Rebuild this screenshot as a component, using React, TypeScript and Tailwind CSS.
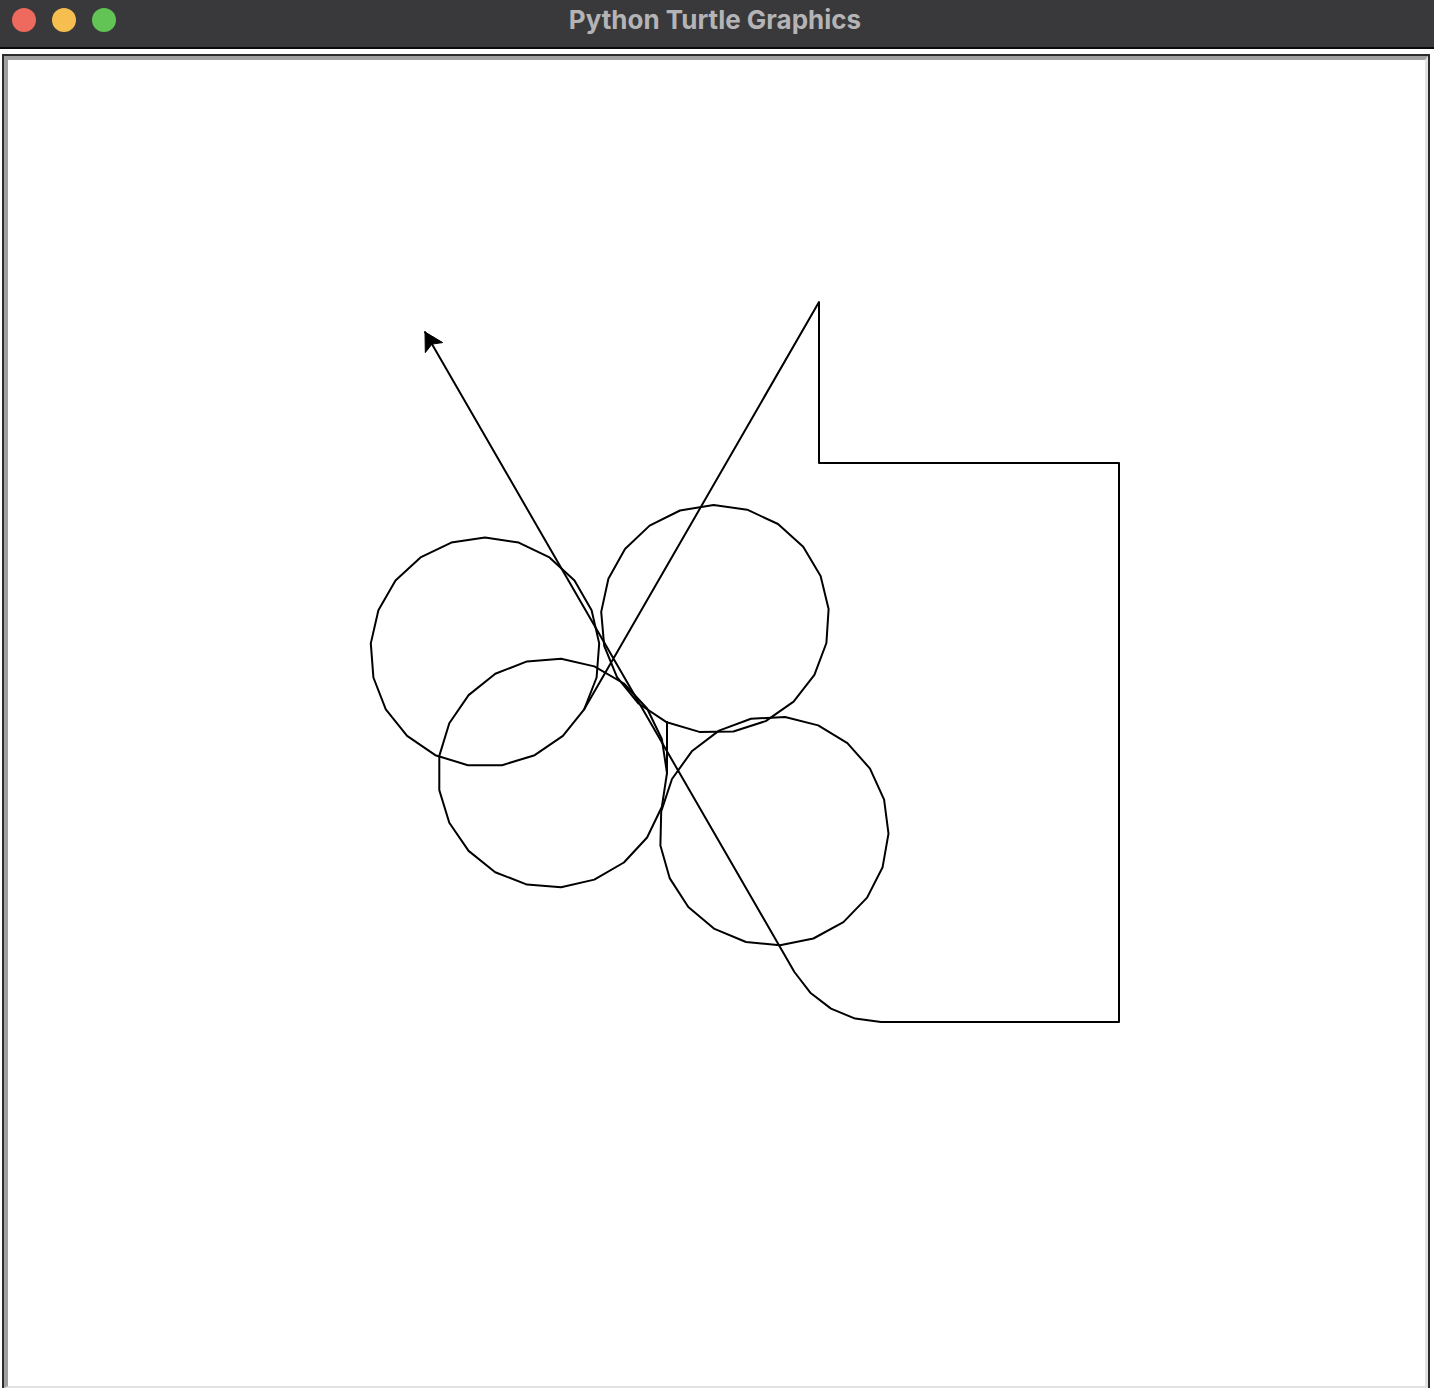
import React from 'react';

// turtle.circle draws a 21-sided polygon for this radius; vertices lie on the circle
const polyCircle = (cx: number, cy: number, r: number, startDeg: number, steps = 21) => {
  const pts: string[] = [];
  for (let i = 0; i < steps; i++) {
    const a = ((startDeg - (360 / steps) * i) * Math.PI) / 180;
    pts.push(`${(cx + r * Math.cos(a)).toFixed(1)},${(cy + r * Math.sin(a)).toFixed(1)}`);
  }
  return pts.join(' ');
};

const circles = [
  { cx: 485, cy: 652, r: 114.5, start: 30 },
  { cx: 715, cy: 619, r: 114, start: 115 },
  { cx: 552.5, cy: 773, r: 114.5, start: 0 },
  { cx: 774, cy: 831, r: 114.5, start: 87 },
];

// arc: circle(50, 60) at 2x scale -> 4 segments
const arcPts = [90, 105, 120, 135, 150].map((d) => {
  const a = (d * Math.PI) / 180;
  return `${(881 + 100 * Math.cos(a)).toFixed(1)},${(922 + 100 * Math.sin(a)).toFixed(1)}`;
});

const mainPath = [
  '584.2,709.3',
  '819,302',
  '819,463',
  '1119,463',
  '1119,1022',
  ...arcPts,
  '425,332',
].join(' ');

const TurtleCanvas: React.FC = () => (
  <svg width={1416} height={1326} viewBox="8 60 1416 1326" className="block">
    <g fill="none" stroke="#000" strokeWidth={2} strokeLinejoin="round" strokeLinecap="round">
      {circles.map((c, i) => (
        <polygon key={i} points={polyCircle(c.cx, c.cy, c.r, c.start)} />
      ))}
      <line x1={667} y1={722} x2={667} y2={773} />
      <polyline points={mainPath} />
    </g>
    <polygon
      points="425,332 442.7,342.6 432,344.1 425.3,352.6"
      fill="#000"
      stroke="#000"
      strokeWidth={1}
      strokeLinejoin="round"
    />
  </svg>
);

const App: React.FC = () => {
  return (
    <div className="w-[1434px] h-[1388px] bg-white overflow-hidden">
      <div className="relative h-[47px] bg-[#39393b] flex items-center">
        <div className="absolute left-[12px] top-[8px] flex gap-[16px]">
          <span className="w-[24px] h-[24px] rounded-full bg-[#ee6a5f]" />
          <span className="w-[24px] h-[24px] rounded-full bg-[#f5be4f]" />
          <span className="w-[24px] h-[24px] rounded-full bg-[#61c454]" />
        </div>
        <div
          className="w-full text-center text-[26px] font-bold text-[#b4b4b6] leading-none pb-[7px] pr-[4px]"
          style={{ fontFamily: 'Inter, "Liberation Sans", sans-serif' }}
        >
          Python Turtle Graphics
        </div>
      </div>
      <div className="h-[2px] bg-[#0a0a0a]" />
      <div className="h-[5px] bg-white" />
      <div className="ml-[2px] w-[1428px] h-[1334px] border-t-2 border-x-2 border-[#2c2c2c]">
        <div className="h-[1332px] border-t-4 border-l-4 border-[#a0a0a0] border-r-[3px] border-r-[#e2e2e2] border-b-2 border-b-[#e2e2e2] bg-white">
          <TurtleCanvas />
        </div>
      </div>
    </div>
  );
};

export default App;
